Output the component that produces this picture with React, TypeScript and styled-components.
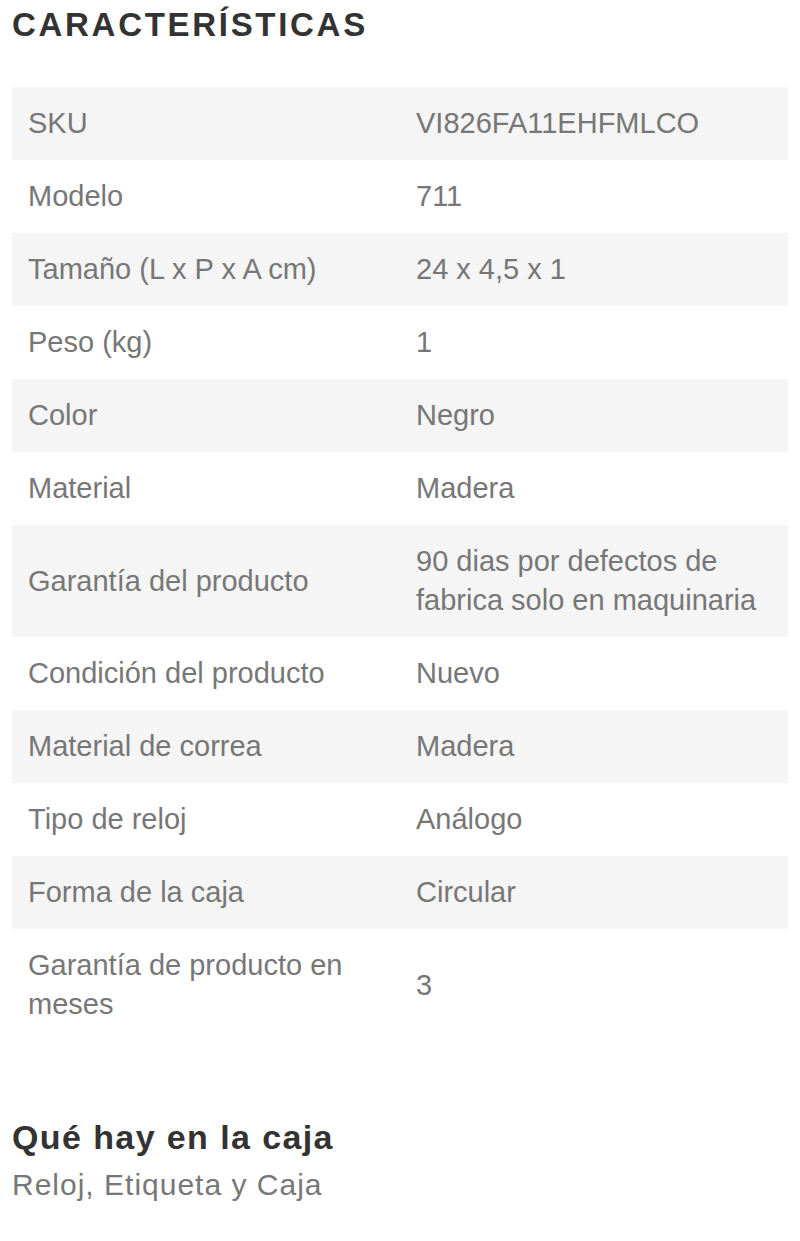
import * as React from 'react';
import styled, { createGlobalStyle } from 'styled-components';

const GlobalStyle = createGlobalStyle`
  body {
    margin: 0;
    background: #fff;
    font-family: 'Liberation Sans', Arial, sans-serif;
  }
`;

const Page = styled.div`
  padding: 0 12px;
  width: 776px;
`;

const Title = styled.h2`
  margin: 5px 0 43px;
  font-size: 33px;
  line-height: 39px;
  font-weight: 700;
  letter-spacing: 2.7px;
  color: #333;
  text-transform: uppercase;
`;

const Table = styled.table`
  width: 100%;
  border-collapse: collapse;
  table-layout: fixed;
`;

const Row = styled.tr<{ $shaded: boolean }>`
  background: ${p => (p.$shaded ? '#f5f5f5' : '#fff')};
`;

const Cell = styled.td`
  padding: 17px 16px;
  font-size: 29px;
  line-height: 39px;
  color: #777;
  vertical-align: middle;
`;

const BoxSection = styled.section`
  margin-top: 77px;
`;

const BoxTitle = styled.h3`
  margin: 0;
  font-size: 34px;
  line-height: 38px;
  font-weight: 700;
  letter-spacing: 1.4px;
  color: #333;
`;

const BoxText = styled.p`
  margin: 11px 0 0;
  font-size: 30px;
  line-height: 36px;
  letter-spacing: 1px;
  color: #777;
`;

const specs: [string, string][] = [
  ['SKU', 'VI826FA11EHFMLCO'],
  ['Modelo', '711'],
  ['Tamaño (L x P x A cm)', '24 x 4,5 x 1'],
  ['Peso (kg)', '1'],
  ['Color', 'Negro'],
  ['Material', 'Madera'],
  ['Garantía del producto', '90 dias por defectos de fabrica solo en maquinaria'],
  ['Condición del producto', 'Nuevo'],
  ['Material de correa', 'Madera'],
  ['Tipo de reloj', 'Análogo'],
  ['Forma de la caja', 'Circular'],
  ['Garantía de producto en meses', '3'],
];

export default function App() {
  return (
    <Page>
      <GlobalStyle />
      <Title>Características</Title>
      <Table>
        <tbody>
          {specs.map(([label, value], i) => (
            <Row key={label} $shaded={i % 2 === 0}>
              <Cell>{label}</Cell>
              <Cell>{value}</Cell>
            </Row>
          ))}
        </tbody>
      </Table>
      <BoxSection>
        <BoxTitle>Qué hay en la caja</BoxTitle>
        <BoxText>Reloj, Etiqueta y Caja</BoxText>
      </BoxSection>
    </Page>
  );
}
